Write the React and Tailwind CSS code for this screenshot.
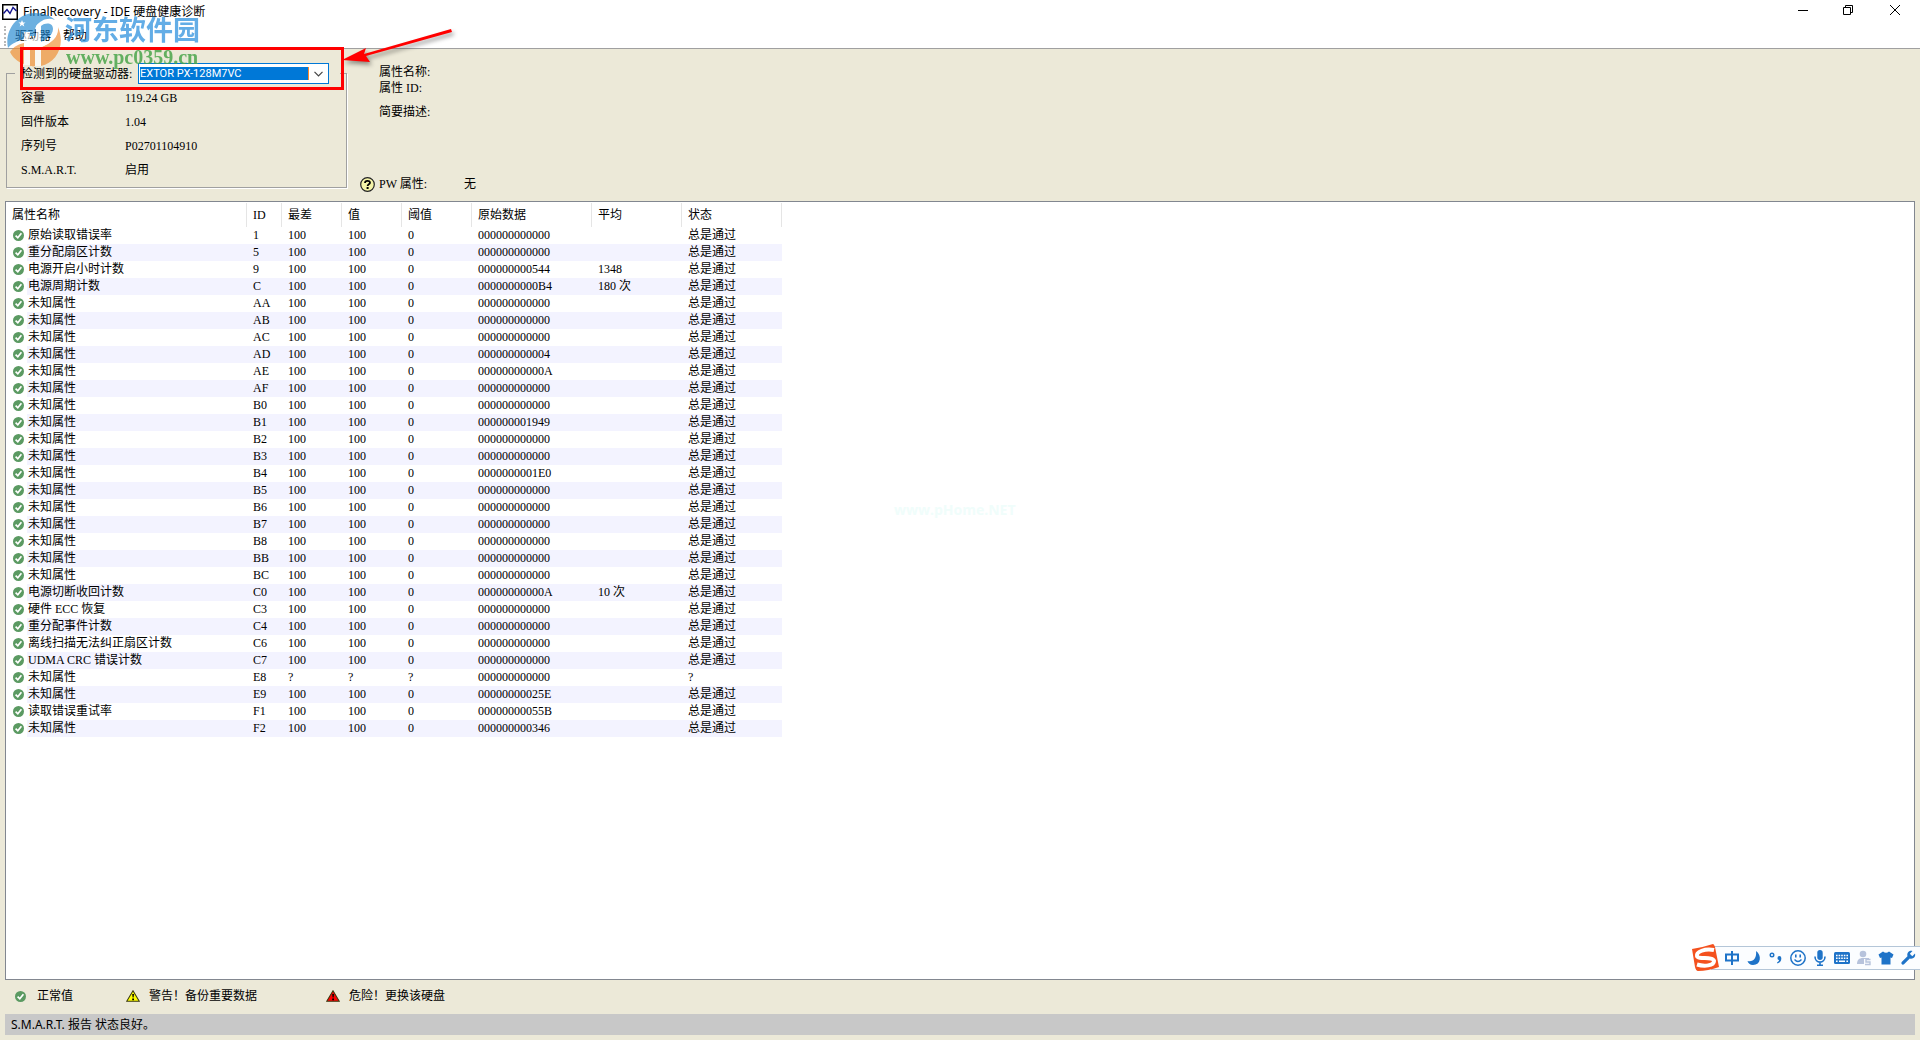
import React from "react";

const attributes = [
    ["原始读取错误率", "1", "100", "100", "0", "000000000000", "", "总是通过"],
    ["重分配扇区计数", "5", "100", "100", "0", "000000000000", "", "总是通过"],
    ["电源开启小时计数", "9", "100", "100", "0", "000000000544", "1348", "总是通过"],
    ["电源周期计数", "C", "100", "100", "0", "0000000000B4", "180 次", "总是通过"],
    ["未知属性", "AA", "100", "100", "0", "000000000000", "", "总是通过"],
    ["未知属性", "AB", "100", "100", "0", "000000000000", "", "总是通过"],
    ["未知属性", "AC", "100", "100", "0", "000000000000", "", "总是通过"],
    ["未知属性", "AD", "100", "100", "0", "000000000004", "", "总是通过"],
    ["未知属性", "AE", "100", "100", "0", "00000000000A", "", "总是通过"],
    ["未知属性", "AF", "100", "100", "0", "000000000000", "", "总是通过"],
    ["未知属性", "B0", "100", "100", "0", "000000000000", "", "总是通过"],
    ["未知属性", "B1", "100", "100", "0", "000000001949", "", "总是通过"],
    ["未知属性", "B2", "100", "100", "0", "000000000000", "", "总是通过"],
    ["未知属性", "B3", "100", "100", "0", "000000000000", "", "总是通过"],
    ["未知属性", "B4", "100", "100", "0", "0000000001E0", "", "总是通过"],
    ["未知属性", "B5", "100", "100", "0", "000000000000", "", "总是通过"],
    ["未知属性", "B6", "100", "100", "0", "000000000000", "", "总是通过"],
    ["未知属性", "B7", "100", "100", "0", "000000000000", "", "总是通过"],
    ["未知属性", "B8", "100", "100", "0", "000000000000", "", "总是通过"],
    ["未知属性", "BB", "100", "100", "0", "000000000000", "", "总是通过"],
    ["未知属性", "BC", "100", "100", "0", "000000000000", "", "总是通过"],
    ["电源切断收回计数", "C0", "100", "100", "0", "00000000000A", "10 次", "总是通过"],
    ["硬件 ECC 恢复", "C3", "100", "100", "0", "000000000000", "", "总是通过"],
    ["重分配事件计数", "C4", "100", "100", "0", "000000000000", "", "总是通过"],
    ["离线扫描无法纠正扇区计数", "C6", "100", "100", "0", "000000000000", "", "总是通过"],
    ["UDMA CRC 错误计数", "C7", "100", "100", "0", "000000000000", "", "总是通过"],
    ["未知属性", "E8", "?", "?", "?", "000000000000", "", "?"],
    ["未知属性", "E9", "100", "100", "0", "00000000025E", "", "总是通过"],
    ["读取错误重试率", "F1", "100", "100", "0", "00000000055B", "", "总是通过"],
    ["未知属性", "F2", "100", "100", "0", "000000000346", "", "总是通过"],
];

const columns = ["属性名称", "ID", "最差", "值", "阈值", "原始数据", "平均", "状态"];

const driveInfo = [
    ["容量", "119.24 GB"],
    ["固件版本", "1.04"],
    ["序列号", "P02701104910"],
    ["S.M.A.R.T.", "启用"],
];

const CheckIcon = () => (
    <svg className="w-[11px] h-[11px] shrink-0" viewBox="0 0 11 11">
        <circle cx="5.5" cy="5.5" r="5.5" fill="#5b9a62" />
        <path d="M2.6 5.6 L4.8 7.8 L8.4 3.2" fill="none" stroke="#fff" strokeWidth="1.7" />
    </svg>
);

const WarnIcon = ({ fill }) => (
    <svg className="w-[14px] h-[12px] shrink-0" viewBox="0 0 14 12">
        <path d="M7 0.8 L13.3 11.3 H0.7 Z" fill={fill} stroke="#3a3a10" strokeWidth="1.1" />
        <path d="M6.2 4 h1.8 l-0.4 3.6 h-1 Z M6.2 8.6 h1.8 v1.6 h-1.8 Z" fill="#000" />
    </svg>
);

const TitleBar = () => (
    <div className="flex h-6 items-center justify-between">
        <div className="flex items-center gap-[5px] pl-[2px]">
            <svg className="w-4 h-4" viewBox="0 0 16 16">
                <rect x="0.75" y="0.75" width="14.5" height="14.5" fill="#fff" stroke="#000" strokeWidth="1.5" />
                <path d="M1.5 9.5 L5 5.5 L8 9.5 L11 3.5 L14.5 7" fill="none" stroke="#10108c" strokeWidth="1.4" />
            </svg>
            <h1 className="text-[12px] leading-4 font-['Noto_Sans','Noto_Sans_CJK_SC',sans-serif]">
                FinalRecovery - IDE 硬盘健康诊断
            </h1>
        </div>
        <div className="flex items-center pb-1">
            <button aria-label="最小化" className="flex w-[45px] h-5 items-center justify-center">
                <svg className="w-[10px] h-[10px]" viewBox="0 0 10 10">
                    <path d="M0 5.5 H10" stroke="#000" />
                </svg>
            </button>
            <button aria-label="还原" className="flex w-[45px] h-5 items-center justify-center">
                <svg className="w-[10px] h-[10px]" viewBox="0 0 10 10" fill="none" stroke="#000">
                    <path d="M0.5 2.5 H7.5 V9.5 H0.5 Z M2.5 2.5 V0.5 H9.5 V7.5 H7.5" />
                </svg>
            </button>
            <button aria-label="关闭" className="flex w-[50px] h-5 items-center justify-center">
                <svg className="w-[10px] h-[10px]" viewBox="0 0 10 10">
                    <path d="M0 0 L10 10 M10 0 L0 10" stroke="#000" />
                </svg>
            </button>
        </div>
    </div>
);

const MenuBar = () => (
    <nav className="flex h-6 items-center gap-3 pl-1">
        <span className="h-5 border-l-2 border-dotted border-[#b8b8b8]" />
        <button className="-ml-[3px]">驱动器</button>
        <button>帮助</button>
    </nav>
);

const DriveBox = () => (
    <fieldset className="w-[341px] h-[125px] min-w-0 border border-[#a0a0a0] shadow-[1px_1px_0_#fff]">
        <legend className="flex w-[325px] ml-2 items-center bg-[#ece9d8]">
            <label htmlFor="drive" className="w-[123px] pl-[6px]">检测到的硬盘驱动器:</label>
            <div className="flex h-[21px] w-[191px] items-center border border-[#0078d7] bg-white pl-px">
                <select
                    id="drive"
                    className="h-[13px] flex-1 appearance-none border-r border-[#ff8728] bg-[#0078d7] p-0 text-[11px] leading-[13px] text-white font-[Roboto,sans-serif]"
                >
                    <option>EXTOR PX-128M7VC</option>
                </select>
                <svg className="w-[9px] h-[6px] mx-[5px]" viewBox="0 0 9 6">
                    <path d="M0.5 0.8 L4.5 4.8 L8.5 0.8" fill="none" stroke="#444" strokeWidth="1.2" />
                </svg>
            </div>
        </legend>
        <dl className="grid grid-cols-[104px_1fr] pt-[2px] pl-[14px]">
            {driveInfo.map(([name, value]) => (
                <React.Fragment key={name}>
                    <dt className="h-6 leading-6">{name}</dt>
                    <dd className="h-6 leading-6">{value}</dd>
                </React.Fragment>
            ))}
        </dl>
    </fieldset>
);

const AttributeInfo = () => (
    <div className="flex flex-col gap-[54px] pt-px pl-[13px]">
        <div className="pl-[19px] leading-4">
            <p>属性名称:</p>
            <p>属性 ID:</p>
            <p className="mt-2">简要描述:</p>
        </div>
        <div className="flex h-5 items-center">
            <svg className="w-[15px] h-[15px]" viewBox="0 0 15 15">
                <circle cx="7.5" cy="7.5" r="6.8" fill="#f4f3a8" stroke="#222" strokeWidth="1.2" />
                <path d="M5 6 C5 3.2 10 3.2 10 5.8 C10 7.4 7.6 7.2 7.6 9" fill="none" stroke="#000" strokeWidth="1.8" />
                <rect x="6.6" y="10" width="2" height="2" fill="#000" />
            </svg>
            <span className="w-[89px] pl-1">PW 属性:</span>
            <span>无</span>
        </div>
    </div>
);

const AttributeTable = () => (
    <table className="w-[776px] table-fixed border-collapse text-left">
        <colgroup>
            <col className="w-[241px]" />
            <col className="w-[35px]" />
            <col className="w-[60px]" />
            <col className="w-[60px]" />
            <col className="w-[70px]" />
            <col className="w-[120px]" />
            <col className="w-[90px]" />
            <col className="w-[100px]" />
        </colgroup>
        <thead>
            <tr className="h-[25px]">
                {columns.map((name) => (
                    <th key={name} className="p-0 font-normal">
                        <div className="h-6 border-r border-[#e5e5e5] pl-[6px] leading-6">{name}</div>
                    </th>
                ))}
            </tr>
        </thead>
        <tbody>
            {attributes.map(([name, ...values], i) => (
                <tr key={i} className="group h-[17px] leading-[17px]">
                    <td className="p-0">
                        <div className="flex items-center pl-[7px]">
                            <CheckIcon />
                            <span className="ml-[3px] h-[17px] flex-1 pl-px group-even:bg-[#f3f3ff]">{name}</span>
                        </div>
                    </td>
                    {values.map((value, j) => (
                        <td key={j} className="p-0 pl-[6px] group-even:bg-[#f3f3ff]">{value}</td>
                    ))}
                </tr>
            ))}
        </tbody>
    </table>
);

const ImeBar = () => (
    <div className="absolute right-0 bottom-[68px] flex h-[28px] items-center">
        <svg className="z-10 -mr-[9px] w-[30px] h-[30px]" viewBox="0 0 30 30">
            <path d="M2 6 Q14 4 23 1 Q24 1 25 4 Q27 14 29 24 Q18 28 8 28 Q6 28 5 24 Z" fill="#f4511e" />
            <path d="M24 7 C15 5 6 9 7 13 C8 17 23 13 24 18 C24 23 14 23.5 7 21.500" fill="none" stroke="#fff" strokeWidth="4" />
        </svg>
        <div className="flex h-6 w-[209px] items-center gap-[6px] border border-r-0 border-[#b4c6d8] bg-[#fbfdff] pl-[12px] text-[#1e73c8]">
            <svg className="w-4 h-4 shrink-0" viewBox="0 0 16 16" fill="none" stroke="currentColor" strokeWidth="2">
                <path d="M2 4.500 H14 V10.500 H2 Z M8 1 V15" />
            </svg>
            <svg className="w-4 h-4 shrink-0" viewBox="0 0 16 16" fill="currentColor">
                <path d="M10 1 C16 5 15 15 7 15 C4 15 2 13 1.500 11 C7 12.500 11 8 10 1 Z" />
            </svg>
            <svg className="w-4 h-4 shrink-0" viewBox="0 0 16 16" fill="none" stroke="currentColor">
                <circle cx="4" cy="5" r="1.800" strokeWidth="1.400" />
                <path d="M9.500 8 a1.900 1.900 0 0 1 3.800 0 C13.500 11 12 12.500 9.500 13.500 L9 12.500 C10.500 11.500 11 11 11 10 C10 10 9.500 9 9.500 8 Z" fill="currentColor" stroke="none" />
            </svg>
            <svg className="w-4 h-4 shrink-0" viewBox="0 0 16 16" fill="none" stroke="currentColor">
                <circle cx="8" cy="8" r="7.200" strokeWidth="1.500" />
                <path d="M5.800 4.500 V7.500 M10.200 4.500 V7.500" strokeWidth="1.600" />
                <path d="M4.500 9.500 Q8 13.500 11.500 9.500" strokeWidth="1.300" />
            </svg>
            <svg className="w-4 h-4 shrink-0" viewBox="0 0 16 16" fill="none" stroke="currentColor" strokeWidth="1.600">
                <rect x="5.300" y="0" width="5.400" height="10" rx="2.700" fill="currentColor" stroke="none" />
                <path d="M3 6.500 C3 14 13 14 13 6.500 M8 12 V15 M5 15.200 H11" />
            </svg>
            <svg className="w-4 h-4 shrink-0" viewBox="0 0 16 16">
                <rect x="0" y="2" width="16" height="12" rx="1.500" fill="currentColor" />
                <path d="M2 5.500 H14 M2 8.300 H14" stroke="#fff" strokeWidth="1.600" strokeDasharray="1.600 1" />
                <path d="M2 11.300 H3.600 M5 11.300 H11 M12.400 11.300 H14" stroke="#fff" strokeWidth="1.600" />
            </svg>
            <svg className="w-4 h-4 shrink-0" viewBox="0 0 16 16" fill="#b7c3dc">
                <circle cx="7" cy="4" r="3.300" />
                <path d="M1 14 C1 10 3 8 7 8 H13 V9 H8 V14 Z" />
                <path d="M14.500 9.500 H10 V12 H14 V14.500 H9" fill="none" stroke="#b7c3dc" strokeWidth="1.400" />
            </svg>
            <svg className="w-4 h-4 shrink-0" viewBox="0 0 16 16" fill="currentColor">
                <path d="M5 1.500 Q8 4 11 1.500 L15.500 4.500 L14 8 L12.500 7.500 V14.500 H3.500 V7.500 L2 8 L0.500 4.500 Z" />
            </svg>
            <svg className="w-4 h-4 shrink-0" viewBox="0 0 16 16" fill="currentColor">
                <path d="M12.500 1 L9.800 3.700 L12.300 6.200 L15 3.500 C16 7 13 9.500 9.800 8.500 L4 14.300 C2.500 15.500 0.500 13.500 1.700 12 L7.500 6.200 C6.500 3 9 0 12.500 1 Z" />
            </svg>
        </div>
    </div>
);

// site logo, red frame and arrow drawn over the window
const Overlay = () => (
    <div className="pointer-events-none absolute top-0 left-0">
        <svg className="absolute top-[12px] left-[6px] w-[56px] h-[56px] opacity-65" viewBox="0 0 56 56">
            {/* blue crescent and the middle block */}
            <path d="M2 36 C-2 18 12 1 29 1 C38 1 45 4 49 8 C42 5 35 8 30 14 L29 24 H24 V20 H18 V27 C12 29 6 31 2 36 Z" fill="#1f86d0" />
            <path d="M24 28 L35 22 V14 C40 10 47 11 47 17 C47 24 38 29 30 32 H24 Z" fill="#1f86d0" />
            <path d="M16 8 l1 2.500 h2.500 l-2 1.600 l0.800 2.400 l-2.300 -1.400 l-2.300 1.400 l0.800 -2.400 l-2 -1.600 h2.500 Z" fill="#fff" />
            {/* orange base and the right swoosh */}
            <path d="M4 40 C8 34 13 32 18 31 V52 C12 50 7 46 4 40 Z" fill="#f08a2c" />
            <path d="M24 36 H29 V54 C27 55 25 54 24 54 Z" fill="#f08a2c" />
            <path d="M52 15 C60 34 50 51 35 54 V35 C46 31 53 25 52 15 Z" fill="#f08a2c" />
            <path d="M18 20 H24 V28 L30 25 V16 H35 V54 H29 V36 H24 V53 H18 Z" fill="#fff" />
            <path d="M30 17 C37 7 49 7 50 16 C51 25 43 31 35 34" fill="none" stroke="#fff" strokeWidth="2.500" />
        </svg>
        <p className="absolute top-[14px] left-[65px] whitespace-nowrap text-[27px] leading-[30px] font-bold text-[#2f92de] opacity-75 font-['Noto_Sans_CJK_SC',sans-serif]">
            河东软件园
        </p>
        <p className="absolute top-[47px] left-[66px] whitespace-nowrap text-[20px] leading-5 font-bold text-[#4ca64c] opacity-85 font-['Liberation_Serif',serif]">
            www.pc0359.cn
        </p>
        <p className="absolute top-[500px] left-[894px] whitespace-nowrap text-[14px] leading-5 font-bold text-[#f0fdfb] font-['Open_Sans',sans-serif]">
            www.pHome.NET
        </p>
        <div className="absolute top-[47px] left-[20px] h-[43px] w-[324px] border-3 border-[#ff0000]" />
        <svg className="absolute top-[24px] left-[338px] w-[124px] h-[46px] drop-shadow-[2px_3px_2px_#0006]" viewBox="0 0 124 46">
            <path d="M4 36 L28 24 L26 30 L113 5 L114 8 L28 32 L32 38 Z" fill="#f00" />
        </svg>
    </div>
);

const App = () => {
    return (
        <div className="relative flex min-h-screen flex-col bg-[#ece9d8] text-[12px] text-black font-['Liberation_Serif','Noto_Sans_CJK_SC',serif]">
            <header className="border-b border-[#a0a0a0] bg-white">
                <TitleBar />
                <MenuBar />
            </header>

            <div className="flex pt-[14px] pl-[6px]">
                <DriveBox />
                <AttributeInfo />
            </div>

            {/* Attribute list */}
            <main className="mx-[5px] mt-[7px] flex-1 border border-[#828790] bg-white">
                <AttributeTable />
            </main>

            <footer className="px-[5px] pb-[5px]">
                <div className="mb-[2px] flex h-8 items-center pl-[10px]">
                    <div className="flex w-[111px] items-center gap-[11px]"><CheckIcon />正常值</div>
                    <div className="flex w-[200px] items-center gap-[9px]"><WarnIcon fill="#ffff00" />警告！备份重要数据</div>
                    <div className="flex items-center gap-[9px]"><WarnIcon fill="#ff0000" />危险！更换该硬盘</div>
                </div>
                <div className="h-[21px] bg-[#c8c8c8] pl-[6px] leading-[21px] font-['Noto_Sans','Noto_Sans_CJK_SC',sans-serif]">
                    S.M.A.R.T. 报告 状态良好。
                </div>
            </footer>

            <ImeBar />
            <Overlay />
        </div>
    );
};

export default App;
